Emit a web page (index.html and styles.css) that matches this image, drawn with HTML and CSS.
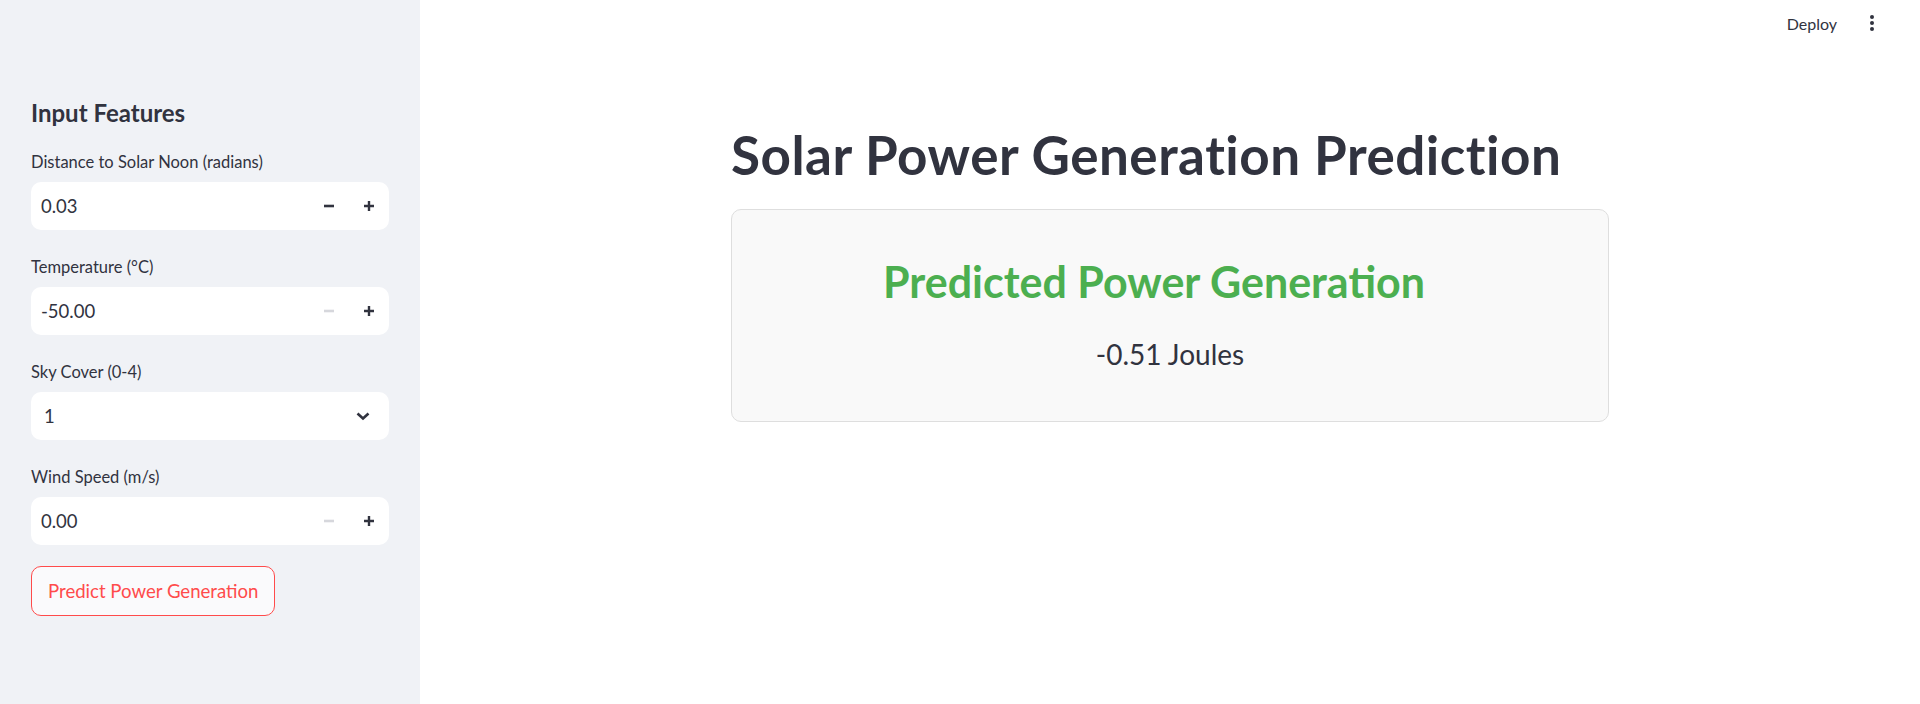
FILE: index.html
```html
<!DOCTYPE html>
<html lang="en">
<head>
<meta charset="utf-8">
<title>Solar Power Generation Prediction</title>
<link rel="stylesheet" href="styles.css">
</head>
<body>
<div class="app">
  <aside class="sidebar">
    <h2 class="sidebar-title">Input Features</h2>

    <div class="field">
      <label class="field-label">Distance to Solar Noon (radians)</label>
      <div class="number-input">
        <span class="number-value">0.03</span>
        <button class="step-btn" type="button" aria-label="minus">
          <svg width="12" height="12" viewBox="0 0 12 12"><path d="M1 6h10" stroke="currentColor" stroke-width="2.6"/></svg>
        </button>
        <button class="step-btn" type="button" aria-label="plus">
          <svg width="12" height="12" viewBox="0 0 12 12"><path d="M1 6h10M6 1v10" stroke="currentColor" stroke-width="2.4"/></svg>
        </button>
      </div>
    </div>

    <div class="field">
      <label class="field-label">Temperature (°C)</label>
      <div class="number-input">
        <span class="number-value">-50.00</span>
        <button class="step-btn step-disabled" type="button" aria-label="minus">
          <svg width="12" height="12" viewBox="0 0 12 12"><path d="M1 6h10" stroke="currentColor" stroke-width="2.6"/></svg>
        </button>
        <button class="step-btn" type="button" aria-label="plus">
          <svg width="12" height="12" viewBox="0 0 12 12"><path d="M1 6h10M6 1v10" stroke="currentColor" stroke-width="2.4"/></svg>
        </button>
      </div>
    </div>

    <div class="field">
      <label class="field-label">Sky Cover (0-4)</label>
      <div class="select-input">
        <span class="select-value">1</span>
        <svg class="chevron" width="14" height="10" viewBox="0 0 14 10"><path d="M1.5 2.5l5.5 5 5.5-5" fill="none" stroke="currentColor" stroke-width="2.6"/></svg>
      </div>
    </div>

    <div class="field">
      <label class="field-label">Wind Speed (m/s)</label>
      <div class="number-input">
        <span class="number-value">0.00</span>
        <button class="step-btn step-disabled" type="button" aria-label="minus">
          <svg width="12" height="12" viewBox="0 0 12 12"><path d="M1 6h10" stroke="currentColor" stroke-width="2.6"/></svg>
        </button>
        <button class="step-btn" type="button" aria-label="plus">
          <svg width="12" height="12" viewBox="0 0 12 12"><path d="M1 6h10M6 1v10" stroke="currentColor" stroke-width="2.4"/></svg>
        </button>
      </div>
    </div>

    <button class="predict-btn" type="button">Predict Power Generation</button>
  </aside>

  <main class="main">
    <header class="topbar">
      <span class="deploy">Deploy</span>
      <svg class="kebab" width="4" height="16" viewBox="0 0 4 16"><circle cx="2" cy="2" r="2"/><circle cx="2" cy="8" r="2"/><circle cx="2" cy="14" r="2"/></svg>
    </header>

    <section class="content">
      <h1 class="page-title">Solar Power Generation Prediction</h1>
      <div class="result-card">
        <h2 class="result-title">Predicted Power Generation</h2>
        <p class="result-value">-0.51 Joules</p>
      </div>
    </section>
  </main>
</div>
</body>
</html>
```
FILE: styles.css
```css
* { box-sizing: border-box; }

html, body {
  margin: 0;
  padding: 0;
  height: 100%;
}

body {
  font-family: "Lato", "Noto Sans", sans-serif;
  color: #31333f;
  background: #ffffff;
}

.app {
  display: flex;
  height: 100vh;
}

/* Sidebar */
.sidebar {
  width: 420px;
  flex: 0 0 420px;
  background: #f0f2f6;
  padding: 97px 31px 0 31px;
  display: flex;
  flex-direction: column;
  gap: 20px;
}

.sidebar-title {
  margin: 0;
  height: 28px;
  padding-top: 2px;
  font-size: 24px;
  line-height: 28px;
  font-weight: 700;
  color: #31333f;
}

.field {
  display: flex;
  flex-direction: column;
}

.field-label {
  font-size: 16.5px;
  line-height: 32px;
  height: 32px;
  margin-bottom: 5px;
  padding-top: 1px;
  color: #31333f;
}

.number-input {
  height: 48px;
  background: #ffffff;
  border-radius: 10px;
  display: flex;
  align-items: center;
  padding-left: 10px;
}

.number-value {
  flex: 1;
  font-size: 18.5px;
  color: #31333f;
}

.step-btn {
  width: 40px;
  height: 48px;
  border: none;
  background: transparent;
  padding: 0;
  display: flex;
  align-items: center;
  justify-content: center;
  color: #31333f;
}

.step-disabled {
  color: #d6d7dc;
}

.select-input {
  height: 48px;
  background: #ffffff;
  border-radius: 10px;
  display: flex;
  align-items: center;
  padding: 0 19px 0 13px;
}

.select-value {
  flex: 1;
  font-size: 18.5px;
  color: #31333f;
}

.chevron {
  color: #31333f;
}

.predict-btn {
  align-self: flex-start;
  height: 50px;
  margin-top: 1px;
  padding: 0 16px;
  border: 1px solid #ff4b4b;
  border-radius: 10px;
  background: #fafafc;
  color: #ff4b4b;
  font-family: "Lato", "Noto Sans", sans-serif;
  font-size: 18.6px;
}

/* Main */
.main {
  flex: 1;
  display: flex;
  flex-direction: column;
  background: #ffffff;
}

.topbar {
  height: 46px;
  display: flex;
  justify-content: flex-end;
  align-items: center;
  gap: 33px;
  padding-right: 46px;
}

.deploy {
  font-size: 16px;
  color: #31333f;
}

.kebab {
  fill: #31333f;
}

.content {
  width: 878px;
  margin: 77px auto 0 auto;
}

.page-title {
  margin: 0;
  font-size: 53px;
  line-height: 64px;
  font-weight: 700;
  letter-spacing: 0.5px;
  color: #31333f;
}

.result-card {
  margin-top: 22px;
  border: 1px solid #dedede;
  border-radius: 10px;
  background: #f9f9f9;
  padding: 46px 0 50px 0;
  text-align: center;
}

.result-title {
  margin: 0 0 29px 0;
  padding-right: 32px;
  font-size: 43px;
  line-height: 52px;
  font-weight: 700;
  color: #4caf50;
}

.result-value {
  margin: 0;
  font-size: 28px;
  line-height: 34px;
  color: #31333f;
}
```
